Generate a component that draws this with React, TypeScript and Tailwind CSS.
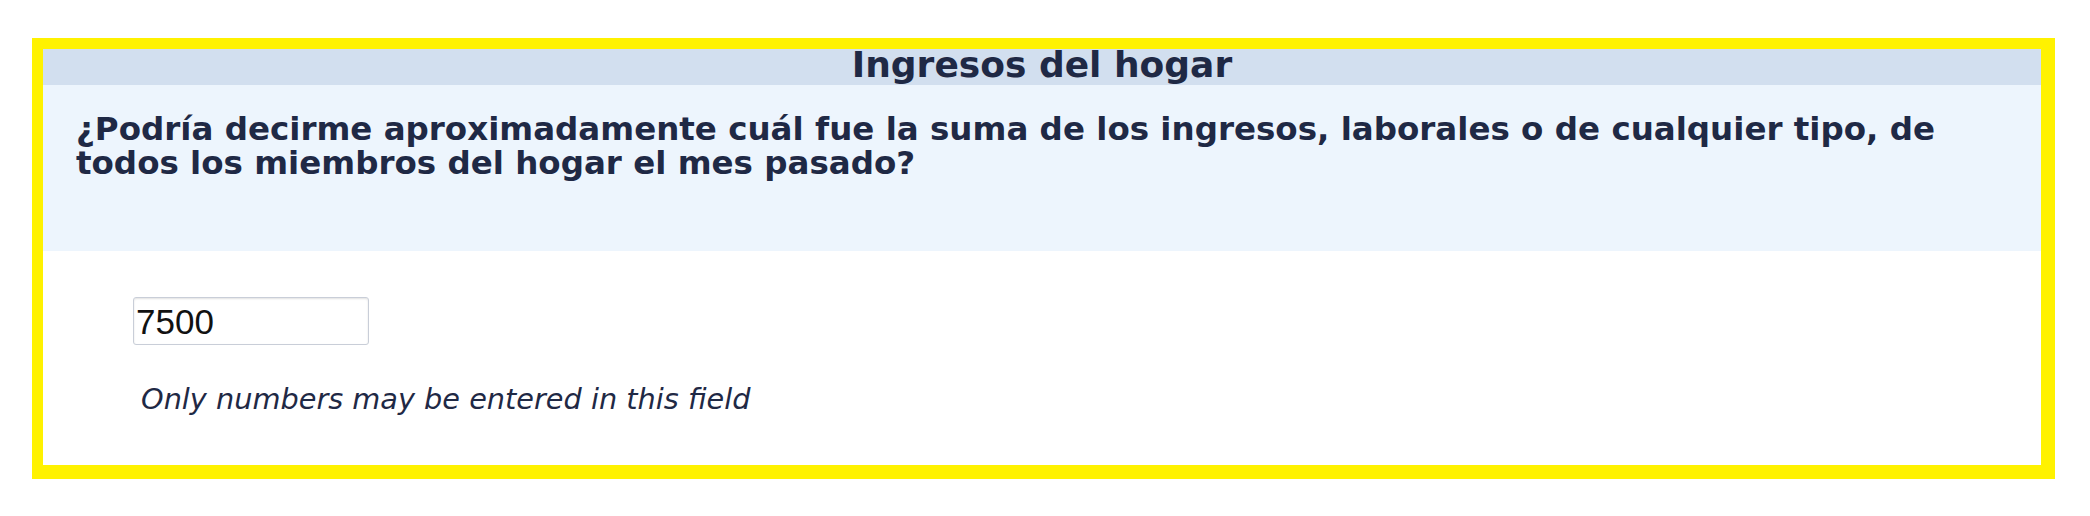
import React from "react";

export default function App() {
  return (
    <div className="w-[2090px] h-[516px] bg-white pt-[38px] pl-[32px]">
      <div className="w-[2023px] h-[441px] border-[#fff200] border-t-[11px] border-l-[11px] border-r-[14px] border-b-[14px] flex flex-col">
        <div className="h-[36px] bg-[#d2dfef] flex items-center justify-center pb-[5px]">
          <span
            className="text-[36px] font-bold text-[#1f2945] leading-none"
            style={{ fontFamily: '"DejaVu Sans", Verdana, sans-serif' }}
          >
            Ingresos del hogar
          </span>
        </div>
        <div className="h-[166px] bg-[#edf5fd] pl-[33px] pr-[40px] pt-[27px]">
          <p
            className="text-[32.5px] font-bold text-[#1f2945] leading-[34px] whitespace-nowrap"
            style={{ fontFamily: '"DejaVu Sans", Verdana, sans-serif' }}
          >
            ¿Podría decirme aproximadamente cuál fue la suma de los ingresos, laborales o de cualquier tipo, de
            <br />
            todos los miembros del hogar el mes pasado?
          </p>
        </div>
        <div className="flex-1 bg-white pl-[90px] pt-[46px]">
          <div className="w-[236px] h-[48px] border border-[#c9ced8] rounded-[3px] shadow-[inset_0_1px_2px_rgba(0,0,0,0.12)] flex items-center pl-[2px]">
            <span
              className="text-[35px] text-[#111] leading-none"
              style={{ fontFamily: '"Liberation Sans", Arial, sans-serif' }}
            >
              7500
            </span>
          </div>
          <p
            className="mt-[40px] ml-[8px] text-[28.75px] italic text-[#1f2945] leading-none whitespace-nowrap"
            style={{ fontFamily: '"DejaVu Sans", Verdana, sans-serif' }}
          >
            Only numbers may be entered in this field
          </p>
        </div>
      </div>
    </div>
  );
}
